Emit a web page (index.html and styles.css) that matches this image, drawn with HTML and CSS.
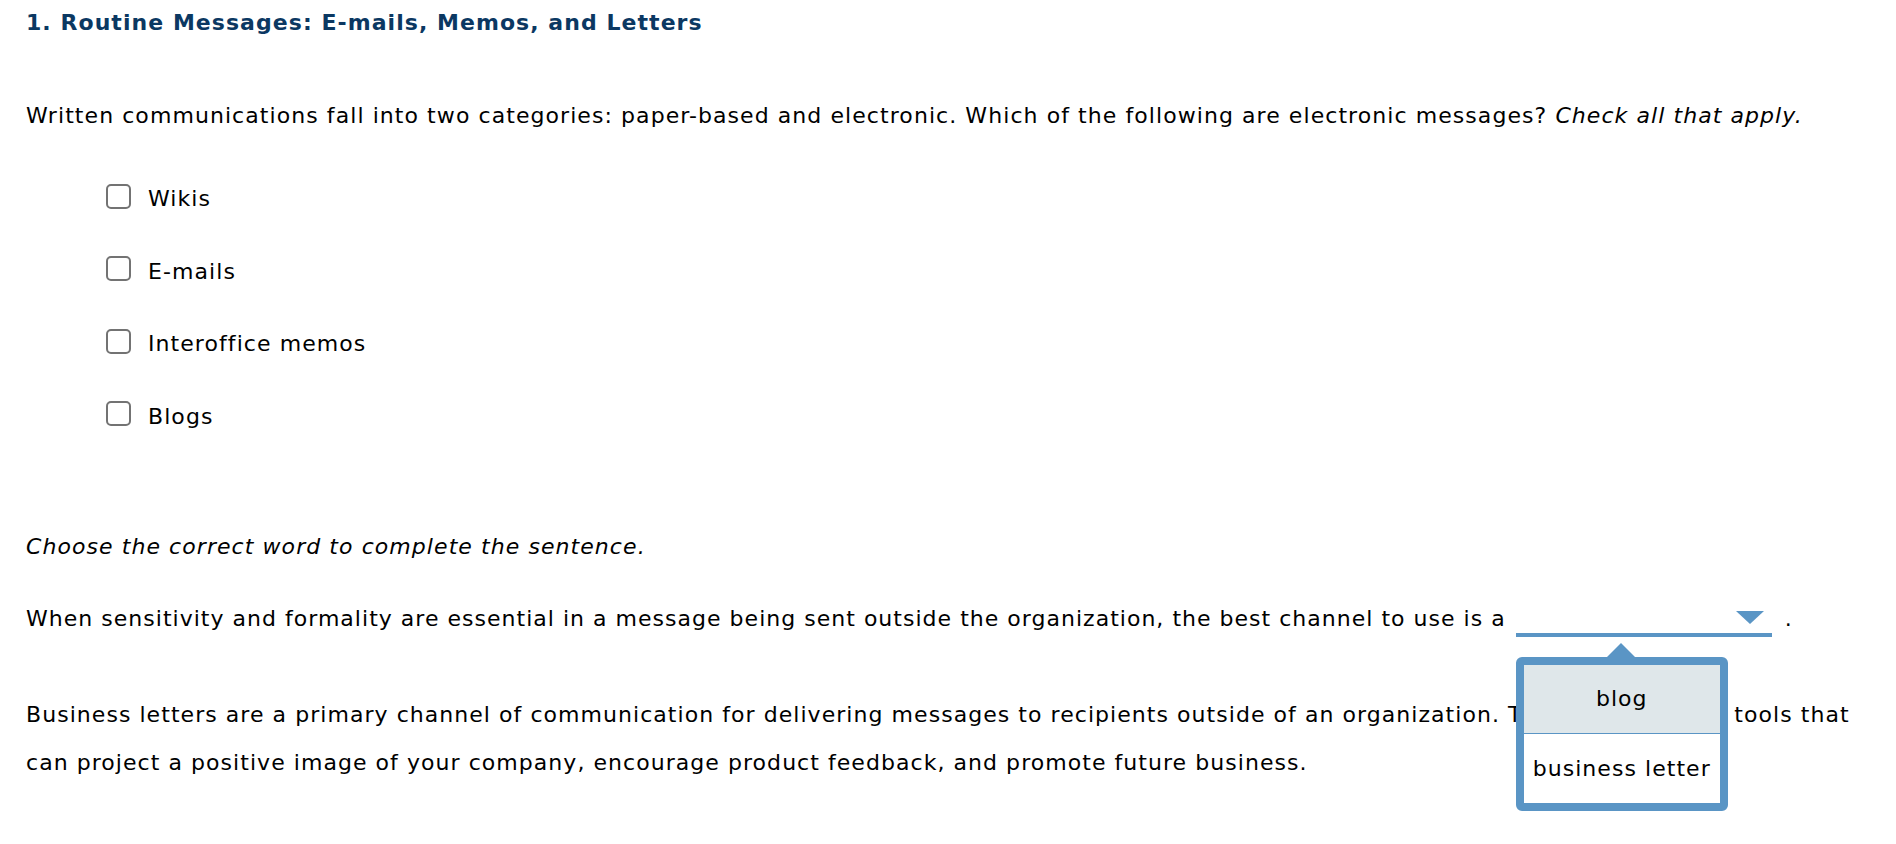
FILE: index.html
```html
<!DOCTYPE html>
<html lang="en">
<head>
<meta charset="utf-8">
<title>Routine Messages</title>
<link rel="stylesheet" href="styles.css">
</head>
<body>
<main class="page">
  <h2 class="title">1. Routine Messages: E-mails, Memos, and Letters</h2>

  <p class="question">Written communications fall into two categories: paper-based and electronic. Which of the following are electronic messages? <em>Check all that apply.</em></p>

  <ul class="choices">
    <li class="choice"><span class="box"></span><span class="label">Wikis</span></li>
    <li class="choice"><span class="box"></span><span class="label">E-mails</span></li>
    <li class="choice"><span class="box"></span><span class="label">Interoffice memos</span></li>
    <li class="choice"><span class="box"></span><span class="label">Blogs</span></li>
  </ul>

  <p class="instruction"><em>Choose the correct word to complete the sentence.</em></p>

  <p class="sentence">When sensitivity and formality are essential in a message being sent outside the organization, the best channel to use is a <span class="dropdown"><span class="arrow"></span><span class="popup"><span class="caret"></span><span class="option selected">blog</span><span class="option">business letter</span></span></span><span class="period">.</span></p>

  <p class="explanation">Business letters are a primary channel of communication for delivering messages to recipients outside of an organization. They are effective tools that<br>can project a positive image of your company, encourage product feedback, and promote future business.</p>
</main>
</body>
</html>
```

FILE: styles.css
```css
html, body {
  margin: 0;
  padding: 0;
  background: #ffffff;
}

body {
  font-family: "DejaVu Sans", Verdana, sans-serif;
  font-size: 22px;
  letter-spacing: 1.07px;
  color: #000000;
}

.page {
  box-sizing: border-box;
  min-height: 844px;
  padding: 8px 0 0 26px;
}

.title {
  margin: 0;
  font-size: 22px;
  line-height: 30px;
  font-weight: bold;
  letter-spacing: 1.05px;
  color: #0b3862;
}

.question {
  margin: 54px 0 0 0;
  line-height: 48px;
  white-space: nowrap;
}

.choices {
  list-style: none;
  margin: 35px 0 0 80px;
  padding: 0;
  display: flex;
  flex-direction: column;
  gap: 24.6px;
}

.choice {
  display: flex;
  align-items: flex-start;
  gap: 17px;
  line-height: 48px;
}

.box {
  flex: none;
  width: 25px;
  height: 25px;
  box-sizing: border-box;
  margin-top: 8.5px;
  border: 2px solid #737373;
  border-radius: 5px;
  background: #ffffff;
}

.instruction {
  margin: 82px 0 0 0;
  line-height: 48px;
}

.sentence {
  margin: 24px 0 0 0;
  line-height: 48px;
  letter-spacing: 1.02px;
  white-space: nowrap;
}

.dropdown {
  position: relative;
  display: inline-block;
  width: 256px;
  height: 20px;
  margin-left: 2px;
  border-bottom: 4px solid #5a95c5;
  vertical-align: -11px;
}

.arrow {
  position: absolute;
  right: 8px;
  top: -2px;
  width: 0;
  height: 0;
  border-left: 14px solid transparent;
  border-right: 14px solid transparent;
  border-top: 13px solid #5a95c5;
}

.popup {
  position: absolute;
  left: 0;
  top: 44px;
  width: 212px;
  box-sizing: border-box;
  border: 8px solid #5a95c5;
  border-radius: 6px;
  background: #ffffff;
  display: flex;
  flex-direction: column;
  z-index: 2;
  letter-spacing: 1.05px;
}

.caret {
  position: absolute;
  left: 83px;
  top: -22px;
  width: 0;
  height: 0;
  border-left: 14px solid transparent;
  border-right: 14px solid transparent;
  border-bottom: 14px solid #5a95c5;
}

.option {
  display: block;
  height: 69px;
  line-height: 69px;
  text-align: center;
  color: #000000;
  background: #ffffff;
}

.option.selected {
  height: 68px;
  line-height: 68px;
  background: #dfe7ea;
  border-bottom: 1px solid #5a95c5;
}

.period {
  margin-left: 13px;
}

.explanation {
  margin: 48px 0 0 0;
  line-height: 48px;
  letter-spacing: 1.05px;
  white-space: nowrap;
}
```
